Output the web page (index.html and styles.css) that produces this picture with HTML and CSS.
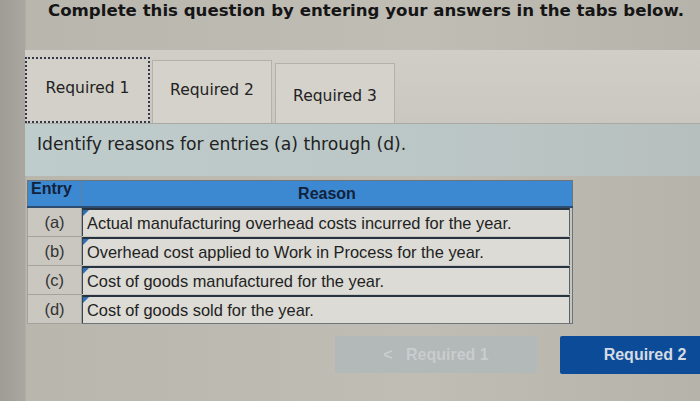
FILE: index.html
```html
<!DOCTYPE html>
<html>
<head>
<meta charset="utf-8">
<link rel="stylesheet" href="styles.css">
</head>
<body>
<div class="page">
  <h1 class="title">Complete this question by entering your answers in the tabs below.</h1>
  <div class="main">
    <div class="tabs">
      <div class="tab active">Required 1</div>
      <div class="tab t2">Required 2</div>
      <div class="tab t3">Required 3</div>
    </div>
    <div class="band">Identify reasons for entries (a) through (d).</div>
    <table class="grid">
      <thead>
        <tr><th class="h-entry">Entry</th><th class="h-reason">Reason</th></tr>
      </thead>
      <tbody>
        <tr><td class="entry">(a)</td><td class="reason"><div class="box"><span class="tri"></span>Actual manufacturing overhead costs incurred for the year.</div></td></tr>
        <tr><td class="entry">(b)</td><td class="reason"><div class="box"><span class="tri"></span>Overhead cost applied to Work in Process for the year.</div></td></tr>
        <tr><td class="entry">(c)</td><td class="reason"><div class="box"><span class="tri"></span>Cost of goods manufactured for the year.</div></td></tr>
        <tr><td class="entry">(d)</td><td class="reason"><div class="box"><span class="tri"></span>Cost of goods sold for the year.</div></td></tr>
      </tbody>
    </table>
    <div class="nav">
      <button class="btn prev">&lt;&nbsp;&nbsp;&nbsp;Required 1</button>
      <button class="btn next">Required 2</button>
    </div>
  </div>
</div>
</body>
</html>
```
FILE: styles.css
```css
html, body {
  margin: 0;
  padding: 0;
}
body {
  width: 700px;
  height: 401px;
  overflow: hidden;
  background: linear-gradient(90deg, #9e9c95 0, #a9a79f 25px, #b9b6ae 26px, #c0bdb5 60%, #b6b3ab 100%);
  font-family: "DejaVu Sans", Verdana, sans-serif;
}
.page {
  display: flex;
  flex-direction: column;
}
.title {
  margin: 0;
  height: 50px;
  box-sizing: border-box;
  padding: 1px 0 0 48px;
  font-size: 16.6px;
  line-height: 20px;
  font-weight: bold;
  color: #151515;
  white-space: nowrap;
}
.main {
  margin-left: 25px;
  display: flex;
  flex-direction: column;
}
.tabs {
  display: flex;
  align-items: flex-end;
  gap: 2px;
  padding-top: 7px;
  background: linear-gradient(180deg, #d0cec6, #c9c7bf);
  border-bottom: 1px solid #a9aaa6;
}
.tab {
  box-sizing: border-box;
  text-align: center;
  font-size: 15.5px;
  color: #222;
  background: #d4d2ca;
  border: 1px solid #b3b1aa;
  border-bottom: none;
}
.tab.active {
  width: 125px;
  height: 66px;
  padding-top: 20px;
  border: 2px dotted #33384a;
  background: #d2d0c8;
}
.tab.t2 {
  width: 120px;
  height: 63px;
  padding-top: 20px;
}
.tab.t3 {
  width: 120px;
  height: 60px;
  padding-top: 23px;
  margin-left: 1px;
}
.band {
  height: 52px;
  box-sizing: border-box;
  padding: 10px 0 0 12px;
  font-size: 17.2px;
  color: #222;
  background: linear-gradient(90deg, #bfcccc, #bbc7c6 60%, #b6bfbe);
}
.grid {
  margin-top: 4px;
  margin-left: 2px;
  width: 546px;
  border-collapse: collapse;
  font-family: "Liberation Sans", Arial, sans-serif;
  border: 1px solid #6f7479;
}
.grid th {
  background: #3c88d1;
  color: #12223a;
  font-size: 16px;
  font-weight: bold;
  height: 25px;
  padding: 0;
  border-bottom: 2px solid #2c4d70;
}
.h-entry {
  width: 50px;
  text-align: left;
  vertical-align: top;
  padding-left: 3px !important;
  line-height: 16px;
  border-right: 1px solid #5d7fa3;
}
.h-reason {
  text-align: center;
  vertical-align: bottom;
  line-height: 24px;
}
.grid td {
  padding: 0;
  height: 28px;
}
.entry {
  background: #c9c7c0;
  text-align: center;
  font-size: 16.5px;
  color: #333;
  border: 1px solid #a3a29d;
}
.reason {
  background: #c6c5bf;
}
.box {
  position: relative;
  box-sizing: border-box;
  height: 28px;
  margin-right: 2px;
  padding: 3px 0 0 4px;
  background: #dcdbd5;
  border-top: 2px solid #27333f;
  border-left: 1px solid #3a4450;
  border-right: 1px solid #5a6068;
  font-size: 16.4px;
  line-height: 20px;
  color: #222;
  white-space: nowrap;
}
.tri {
  position: absolute;
  left: 0;
  top: 0;
  width: 0;
  height: 0;
  border-top: 6px solid #2f6fb5;
  border-right: 6px solid transparent;
}
.nav {
  display: flex;
  justify-content: flex-end;
  gap: 23px;
  margin-top: 12px;
}
.btn {
  font-family: "Liberation Sans", Arial, sans-serif;
  font-size: 16px;
  border: none;
  height: 38px;
  padding: 0;
}
.btn.prev {
  width: 202px;
  height: 37px;
  background: #b3b8b8;
  color: #c9cdcd;
  font-weight: bold;
}
.btn.next {
  width: 140px;
  background: #0c4b98;
  color: #d6dbe3;
  font-weight: bold;
  border-radius: 2px 0 0 2px;
  padding-left: 30px;
}
```
